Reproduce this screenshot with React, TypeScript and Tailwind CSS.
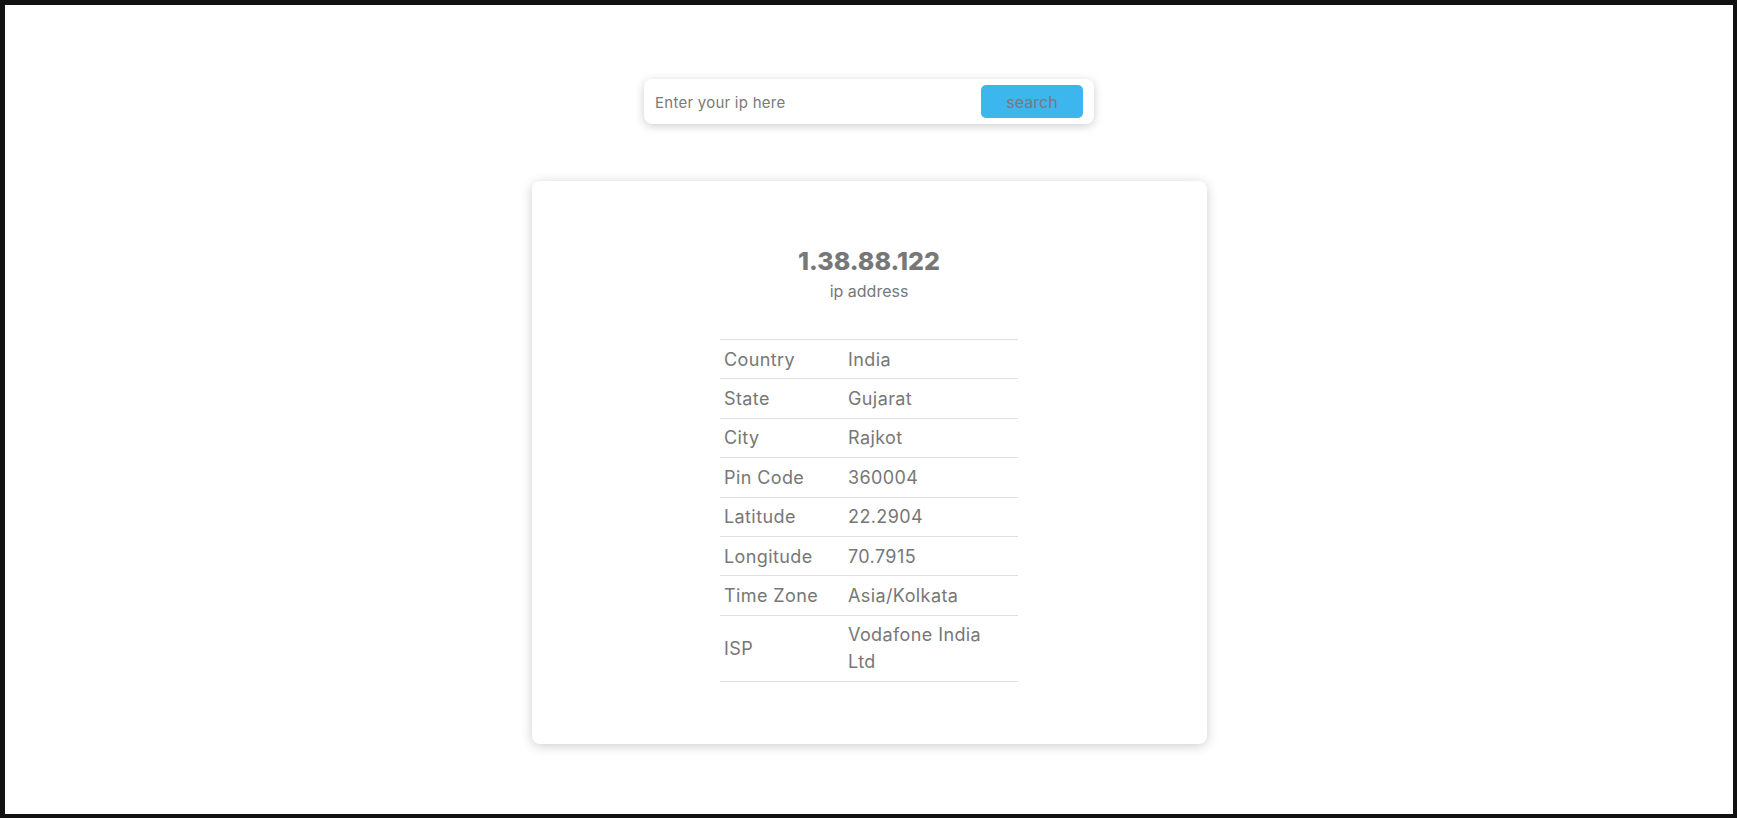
import { useState } from "react";

interface Row {
  label: string;
  value: string;
}

const rows: Row[] = [
  { label: "Country", value: "India" },
  { label: "State", value: "Gujarat" },
  { label: "City", value: "Rajkot" },
  { label: "Pin Code", value: "360004" },
  { label: "Latitude", value: "22.2904" },
  { label: "Longitude", value: "70.7915" },
  { label: "Time Zone", value: "Asia/Kolkata" },
  { label: "ISP", value: "Vodafone India Ltd" },
];

export default function App() {
  const [ip, setIp] = useState("");

  return (
    <div
      className="h-screen w-full bg-white border-[#111] border-t-[5px] border-l-[5px] border-r-[4px] border-b-[4px] text-[#777]"
      style={{ fontFamily: "Inter, 'DejaVu Sans', sans-serif" }}
    >
      <div className="flex flex-col items-center">
        {/* Search bar */}
        <form
          className="mt-[74px] flex h-[45px] w-[450px] items-center justify-between rounded-[8px] bg-white pl-[11px] pr-[11px] shadow-[0_2px_10px_rgba(0,0,0,0.2)]"
          onSubmit={(e) => e.preventDefault()}
        >
          <input
            value={ip}
            onChange={(e) => setIp(e.target.value)}
            placeholder="Enter your ip here"
            className="mt-[3px] w-[260px] bg-transparent text-[15px] tracking-[0.25px] text-[#777] outline-none placeholder:text-[#7a7a7a]"
          />
          <button
            type="submit"
            className="h-[33px] w-[102px] rounded-[5px] bg-[#3db5ed] text-[16px] text-[#7a7a7a]"
          >
            search
          </button>
        </form>

        {/* Result card */}
        <div className="mt-[57px] flex w-[675px] flex-col items-center rounded-[8px] bg-white pt-[65px] pb-[62px] shadow-[0_2px_12px_rgba(0,0,0,0.2)]">
          <h1 className="text-[25px] font-extrabold leading-[30px] text-[#777]">1.38.88.122</h1>
          <p className="mt-[3px] text-[16px] leading-[24px] text-[#777]">ip address</p>

          <table className="mt-[36px] w-[298px] border-collapse text-[18px] leading-[27px] tracking-[0.4px]">
            <tbody>
              {rows.map((row) => (
                <tr key={row.label} className="border-y border-[#e0e0e0]">
                  <td className="w-[124px] py-[5.7px] pl-[4px] align-middle">{row.label}</td>
                  <td className="py-[5.7px] pl-[4px] pr-[20px] align-middle">{row.value}</td>
                </tr>
              ))}
            </tbody>
          </table>
        </div>
      </div>
    </div>
  );
}
